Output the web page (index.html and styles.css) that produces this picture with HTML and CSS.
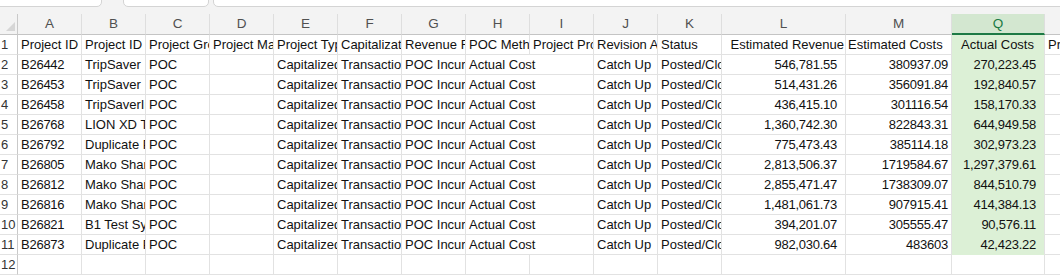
FILE: index.html
```html
<!DOCTYPE html>
<html>
<head>
<meta charset="utf-8">
<link rel="stylesheet" href="styles.css">
</head>
<body>
<div class="top">
  <div class="box b1"></div>
  <div class="box b2"></div>
  <div class="box b3"></div>
</div>
<div class="sheet">
  <div class="corner"><span class="tri"></span></div>
  <div class="ch">A</div><div class="ch">B</div><div class="ch">C</div><div class="ch">D</div><div class="ch">E</div><div class="ch">F</div><div class="ch">G</div><div class="ch">H</div><div class="ch">I</div><div class="ch">J</div><div class="ch">K</div><div class="ch">L</div><div class="ch">M</div><div class="ch sel">Q</div><div class="ch last"></div>

  <div class="rh">1</div>
  <div class="c">Project ID</div><div class="c">Project ID Name</div><div class="c">Project Group</div><div class="c">Project Manager</div><div class="c">Project Type</div><div class="c">Capitalization</div><div class="c">Revenue Recognition</div><div class="c">POC Method</div><div class="c">Project Progress</div><div class="c">Revision Approach</div><div class="c">Status</div><div class="c r hl">Estimated Revenue</div><div class="c hm">Estimated Costs</div><div class="c q hq">Actual Costs</div><div class="c last">Project</div>

  <div class="rh">2</div>
  <div class="c n">B26442</div><div class="c">TripSaver</div><div class="c">POC</div><div class="c"></div><div class="c">Capitalized</div><div class="c">Transaction</div><div class="c">POC Incurred</div><div class="c span2">Actual Cost</div><div class="c">Catch Up</div><div class="c">Posted/Closed</div><div class="c n r pl">546,781.55</div><div class="c n r pm">380937.09</div><div class="c n r q pl">270,223.45</div><div class="c last"></div>

  <div class="rh">3</div>
  <div class="c n">B26453</div><div class="c">TripSaver</div><div class="c">POC</div><div class="c"></div><div class="c">Capitalized</div><div class="c">Transaction</div><div class="c">POC Incurred</div><div class="c span2">Actual Cost</div><div class="c">Catch Up</div><div class="c">Posted/Closed</div><div class="c n r pl">514,431.26</div><div class="c n r pm">356091.84</div><div class="c n r q pl">192,840.57</div><div class="c last"></div>

  <div class="rh">4</div>
  <div class="c n">B26458</div><div class="c">TripSaverIntl</div><div class="c">POC</div><div class="c"></div><div class="c">Capitalized</div><div class="c">Transaction</div><div class="c">POC Incurred</div><div class="c span2">Actual Cost</div><div class="c">Catch Up</div><div class="c">Posted/Closed</div><div class="c n r pl">436,415.10</div><div class="c n r pm">301116.54</div><div class="c n r q pl">158,170.33</div><div class="c last"></div>

  <div class="rh">5</div>
  <div class="c n">B26768</div><div class="c">LION XD Tracking</div><div class="c">POC</div><div class="c"></div><div class="c">Capitalized</div><div class="c">Transaction</div><div class="c">POC Incurred</div><div class="c span2">Actual Cost</div><div class="c">Catch Up</div><div class="c">Posted/Closed</div><div class="c n r pl">1,360,742.30</div><div class="c n r pm">822843.31</div><div class="c n r q pl">644,949.58</div><div class="c last"></div>

  <div class="rh">6</div>
  <div class="c n">B26792</div><div class="c">Duplicate Project</div><div class="c">POC</div><div class="c"></div><div class="c">Capitalized</div><div class="c">Transaction</div><div class="c">POC Incurred</div><div class="c span2">Actual Cost</div><div class="c">Catch Up</div><div class="c">Posted/Closed</div><div class="c n r pl">775,473.43</div><div class="c n r pm">385114.18</div><div class="c n r q pl">302,973.23</div><div class="c last"></div>

  <div class="rh">7</div>
  <div class="c n">B26805</div><div class="c">Mako Shark</div><div class="c">POC</div><div class="c"></div><div class="c">Capitalized</div><div class="c">Transaction</div><div class="c">POC Incurred</div><div class="c span2">Actual Cost</div><div class="c">Catch Up</div><div class="c">Posted/Closed</div><div class="c n r pl">2,813,506.37</div><div class="c n r pm">1719584.67</div><div class="c n r q pl">1,297,379.61</div><div class="c last"></div>

  <div class="rh">8</div>
  <div class="c n">B26812</div><div class="c">Mako Shark</div><div class="c">POC</div><div class="c"></div><div class="c">Capitalized</div><div class="c">Transaction</div><div class="c">POC Incurred</div><div class="c span2">Actual Cost</div><div class="c">Catch Up</div><div class="c">Posted/Closed</div><div class="c n r pl">2,855,471.47</div><div class="c n r pm">1738309.07</div><div class="c n r q pl">844,510.79</div><div class="c last"></div>

  <div class="rh">9</div>
  <div class="c n">B26816</div><div class="c">Mako Shark</div><div class="c">POC</div><div class="c"></div><div class="c">Capitalized</div><div class="c">Transaction</div><div class="c">POC Incurred</div><div class="c span2">Actual Cost</div><div class="c">Catch Up</div><div class="c">Posted/Closed</div><div class="c n r pl">1,481,061.73</div><div class="c n r pm">907915.41</div><div class="c n r q pl">414,384.13</div><div class="c last"></div>

  <div class="rh">10</div>
  <div class="c n">B26821</div><div class="c">B1 Test System</div><div class="c">POC</div><div class="c"></div><div class="c">Capitalized</div><div class="c">Transaction</div><div class="c">POC Incurred</div><div class="c span2">Actual Cost</div><div class="c">Catch Up</div><div class="c">Posted/Closed</div><div class="c n r pl">394,201.07</div><div class="c n r pm">305555.47</div><div class="c n r q pl">90,576.11</div><div class="c last"></div>

  <div class="rh">11</div>
  <div class="c n">B26873</div><div class="c">Duplicate Project</div><div class="c">POC</div><div class="c"></div><div class="c">Capitalized</div><div class="c">Transaction</div><div class="c">POC Incurred</div><div class="c span2">Actual Cost</div><div class="c">Catch Up</div><div class="c">Posted/Closed</div><div class="c n r pl">982,030.64</div><div class="c n r pm">483603</div><div class="c n r q pl">42,423.22</div><div class="c last"></div>

  <div class="rh">12</div>
  <div class="c"></div><div class="c"></div><div class="c"></div><div class="c"></div><div class="c"></div><div class="c"></div><div class="c"></div><div class="c"></div><div class="c"></div><div class="c"></div><div class="c"></div><div class="c"></div><div class="c"></div><div class="c"></div><div class="c last"></div>
</div>
</body>
</html>
```

FILE: styles.css
```css
html, body {
  margin: 0;
  padding: 0;
  background: #ffffff;
  overflow: hidden;
}
body {
  width: 1060px;
  height: 275px;
  font-family: "Liberation Sans", Arial, sans-serif;
  font-size: 13px;
  color: #111111;
}
.top {
  height: 14px;
  background: #f3f3f3;
  display: flex;
  align-items: flex-end;
  overflow: hidden;
}
.box {
  flex: none;
  height: 26px;
  margin-bottom: 7px;
  background: #ffffff;
  border: 1px solid #d4d4d4;
  border-radius: 5px;
  box-sizing: border-box;
}
.b1 { width: 112px; margin-left: -10px; }
.b2 { width: 86px; margin-left: 21px; }
.b3 { width: 900px; margin-left: 4px; }

.sheet {
  display: grid;
  grid-template-columns: 18px repeat(11, 64px) 124px 106px 93px 80px;
  grid-template-rows: 21px repeat(12, 20px);
  width: 1060px;
  overflow: hidden;
}
.corner {
  background: #f3f3f3;
  border-right: 1px solid #c9c9c9;
  border-bottom: 1px solid #c4c4c4;
  box-sizing: border-box;
  position: relative;
}
.tri {
  position: absolute;
  right: 2px;
  bottom: 3px;
  width: 0;
  height: 0;
  border-left: 9px solid transparent;
  border-bottom: 9px solid #d6d6d6;
}
.ch {
  background: #f3f3f3;
  border-right: 1px solid #dedede;
  border-bottom: 1px solid #c4c4c4;
  box-sizing: border-box;
  color: #505050;
  text-align: center;
  line-height: 20px;
  font-size: 13.5px;
}
.ch.sel {
  background: #d3e7d0;
  color: #1a7a43;
  border-bottom: 2px solid #1d7a45;
  line-height: 19px;
}
.ch.last { border-right: none; }
.rh {
  background: #ffffff;
  border-right: 1px solid #c9c9c9;
  border-bottom: 1px solid #e2e2e2;
  box-sizing: border-box;
  color: #333333;
  padding-left: 1px;
  line-height: 19px;
  font-size: 13px;
  overflow: hidden;
  white-space: nowrap;
}
.c {
  border-right: 1px solid #e2e2e2;
  border-bottom: 1px solid #e2e2e2;
  box-sizing: border-box;
  padding: 0 2px 0 3px;
  line-height: 19px;
  white-space: nowrap;
  overflow: hidden;
}
.c.last { border-right: none; }
.span2 { grid-column: span 2; }
.n { letter-spacing: -0.25px; }
.r { text-align: right; }
.pl { padding-right: 8px; }
.pm { padding-right: 3px; }
.hl { padding-right: 1px; }
.hm { padding-left: 2px; }
.q {
  background: #dcf0d6;
  border-bottom-color: #dcf0d6;
}
.hq {
  text-align: center;
  padding-right: 4px;
}
```
